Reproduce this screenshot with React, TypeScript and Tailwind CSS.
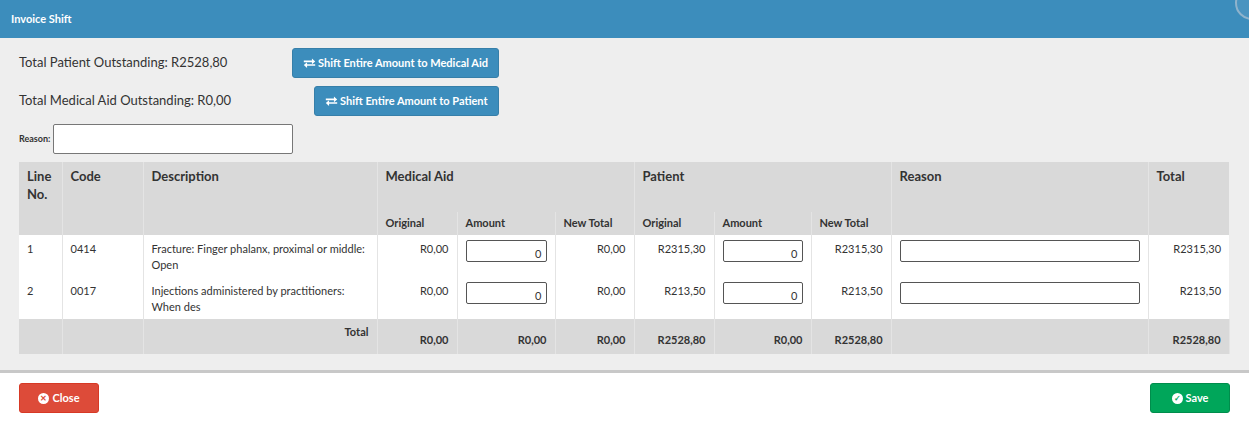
import React from "react";

const Arrows = () => (
  <svg width="13" height="12" viewBox="0 0 16 14" className="mr-[2px]" fill="white">
    <path d="M1 4h10V1.5L15 5l-4 3.5V6H1z" />
    <path d="M15 8.5H5V6L1 9.5 5 13v-2.5h10z" />
  </svg>
);

const th = "text-left font-bold text-[13px] text-[#333] align-top px-2";
const td = "border-r border-[#e4e4e4] px-2 align-top text-[11px] text-[#333]";

const rows = [
  { n: "1", c: "0414", d: "Fracture: Finger phalanx, proximal or middle: Open", o: "R2315,30" },
  { n: "2", c: "0017", d: "Injections administered by practitioners: When des", o: "R213,50" },
];

export default function App() {
  return (
    <div className="w-[1249px] h-[427px] bg-white overflow-hidden relative" style={{ fontFamily: "Lato, 'Noto Sans', sans-serif" }}>
      <div className="h-[38px] bg-[#3c8dbc] flex items-center px-[11px] text-white font-bold text-[11px] relative overflow-hidden">
        Invoice Shift
        <div className="absolute right-[-20px] top-[-14px] w-[34px] h-[34px] rounded-full border-2 border-[#8fb3cc] bg-[#4a94c0]" />
      </div>
      <div className="bg-[#eeeeee] h-[335px] px-[19px] pt-[10px] border-b-[3px] border-[#c8c8c8]">
        <div className="flex items-center h-[30px]">
          <div className="w-[273px] text-[13px] text-[#333]">Total Patient Outstanding: R2528,80</div>
          <button className="h-[30px] px-[10px] bg-[#3c8dbc] border border-[#367fa9] rounded-[3px] text-white text-[11px] font-bold flex items-center"><Arrows />Shift Entire Amount to Medical Aid</button>
        </div>
        <div className="flex items-center h-[30px] mt-[8px]">
          <div className="w-[295px] text-[13px] text-[#333]">Total Medical Aid Outstanding: R0,00</div>
          <button className="h-[30px] px-[10px] bg-[#3c8dbc] border border-[#367fa9] rounded-[3px] text-white text-[11px] font-bold flex items-center"><Arrows />Shift Entire Amount to Patient</button>
        </div>
        <div className="flex items-center mt-[8px] h-[30px]">
          <span className="text-[9px] text-[#333] mr-[3px] font-bold">Reason:</span>
          <div className="w-[240px] h-[30px] bg-white border border-[#777] rounded-[2px]" />
        </div>
        <table className="mt-[8px] w-[1210px] border-collapse table-fixed">
          <colgroup>
            {[43, 81, 234, 80, 98, 79, 80, 97, 80, 257, 81].map((w, i) => <col key={i} style={{ width: w }} />)}
          </colgroup>
          <thead className="bg-[#d9d9d9]">
            <tr className="h-[50px]">
              <th rowSpan={2} className={th + " pt-[5px] leading-[18px] border-r border-[#e4e4e4]"}>Line No.</th>
              <th rowSpan={2} className={th + " pt-[5px] border-r border-[#e4e4e4]"}>Code</th>
              <th rowSpan={2} className={th + " pt-[5px] border-r border-[#e4e4e4]"}>Description</th>
              <th colSpan={3} className={th + " pt-[5px]"}>Medical Aid</th>
              <th colSpan={3} className={th + " pt-[5px] border-l border-[#e4e4e4]"}>Patient</th>
              <th rowSpan={2} className={th + " pt-[5px] border-x border-[#e4e4e4]"}>Reason</th>
              <th rowSpan={2} className={th + " pt-[5px]"}>Total</th>
            </tr>
            <tr className="h-[23px] text-[11px]">
              {["Original", "Amount", "New Total", "Original", "Amount", "New Total"].map((h, i) => (
                <th key={i} className={"text-left font-bold text-[11px] text-[#333] px-2 align-middle border-r border-[#e4e4e4]"}>{h}</th>
              ))}
            </tr>
          </thead>
          <tbody className="bg-white">
            {rows.map((r) => (
              <tr key={r.n} className="h-[42px]">
                <td className={td + " pt-[6px]"}>{r.n}</td>
                <td className={td + " pt-[6px]"}>{r.c}</td>
                <td className={td + " pt-[6px] leading-[16px]"}>{r.d}</td>
                <td className={td + " pt-[6px] text-right"}>R0,00</td>
                <td className={td + " pt-[5px]"}><div className="h-[22px] border border-[#555] rounded-[2px] text-right pr-[4px] text-[11px] leading-[22px] pt-[2px]">0</div></td>
                <td className={td + " pt-[6px] text-right"}>R0,00</td>
                <td className={td + " pt-[6px] text-right"}>{r.o}</td>
                <td className={td + " pt-[5px]"}><div className="h-[22px] border border-[#555] rounded-[2px] text-right pr-[4px] text-[11px] leading-[22px] pt-[2px]">0</div></td>
                <td className={td + " pt-[6px] text-right"}>{r.o}</td>
                <td className={td + " pt-[5px]"}><div className="h-[22px] border border-[#555] rounded-[2px]" /></td>
                <td className="px-2 align-top pt-[6px] text-[11px] text-[#333] text-right">{r.o}</td>
              </tr>
            ))}
            <tr className="h-[35px] bg-[#d9d9d9] text-[11px] font-bold text-[#333]">
              <td className="border-r border-[#e4e4e4]" />
              <td className="border-r border-[#e4e4e4]" />
              <td className="border-r border-[#e4e4e4] text-right px-2 align-top pt-[5px]">Total</td>
              {["R0,00", "R0,00", "R0,00", "R2528,80", "R0,00", "R2528,80", "", "R2528,80"].map((v, i) => (
                <td key={i} className="border-r border-[#e4e4e4] text-right px-2 align-bottom pb-[6px]">{v}</td>
              ))}
            </tr>
          </tbody>
        </table>
      </div>
      <div className="flex justify-between px-[19px] pt-[10px]">
        <button className="w-[80px] h-[30px] bg-[#dd4b39] border border-[#d73925] rounded-[3px] text-white text-[11px] font-bold flex items-center justify-center gap-[3px]">
          <span className="w-[11px] h-[11px] rounded-full bg-white text-[#dd4b39] text-[8px] leading-[11px] text-center">✕</span>Close
        </button>
        <button className="w-[80px] h-[30px] bg-[#00a65a] border border-[#008d4c] rounded-[3px] text-white text-[11px] font-bold flex items-center justify-center gap-[3px]">
          <span className="w-[11px] h-[11px] rounded-full bg-white text-[#00a65a] text-[8px] leading-[11px] text-center">✓</span>Save
        </button>
      </div>
    </div>
  );
}
